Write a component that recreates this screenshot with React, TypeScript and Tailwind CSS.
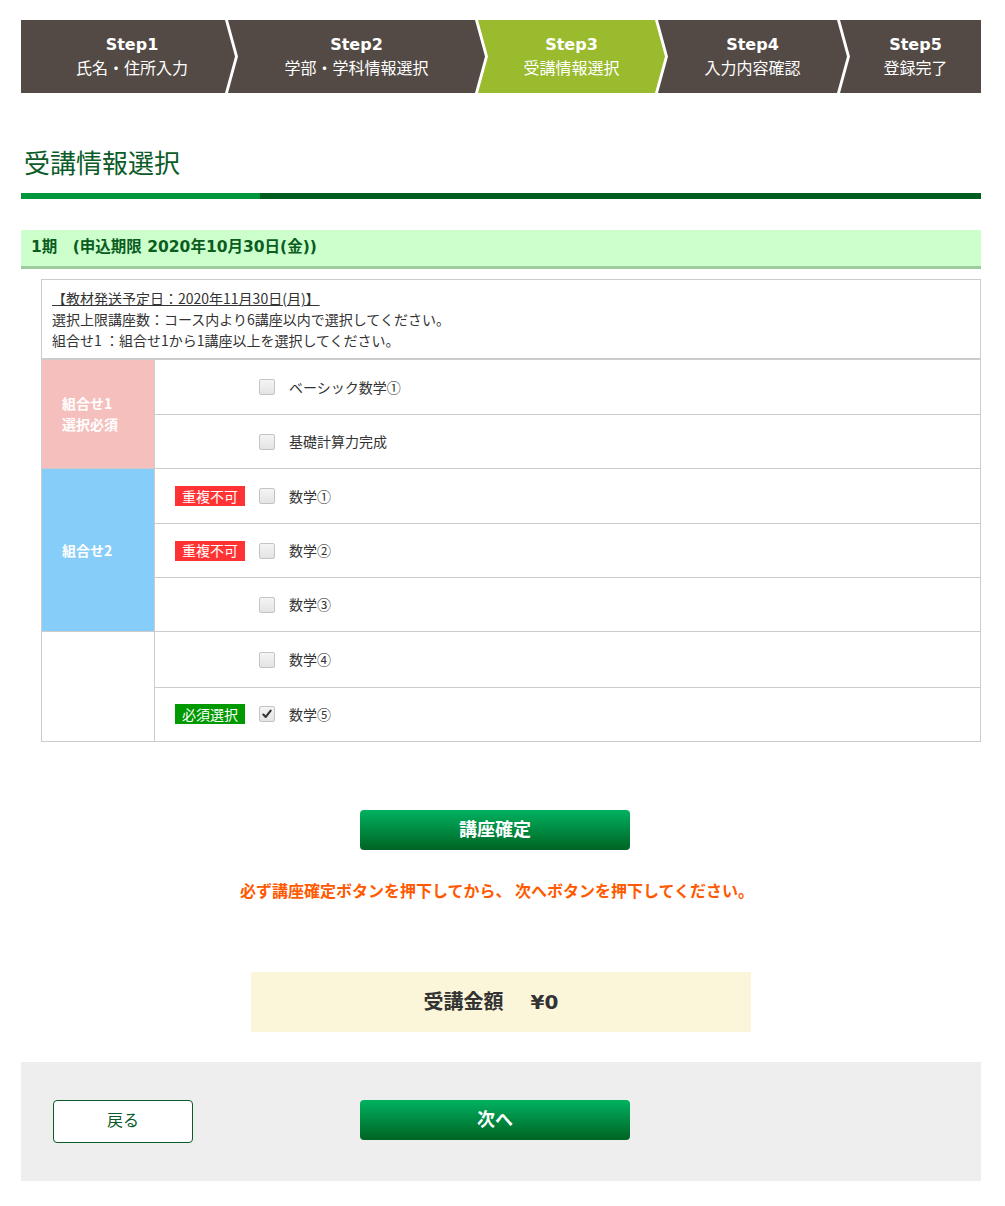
import React from 'react';

const steps = [
  { no: 'Step1', label: '氏名・住所入力', box: 'w-[214px] pl-[18px] pr-[10px] [clip-path:polygon(0_0,calc(100%_-_10px)_0,100%_50%,calc(100%_-_10px)_100%,0_100%)]' },
  { no: 'Step2', label: '学部・学科情報選択', box: 'w-[257px] ml-[-7px] px-[10px] [clip-path:polygon(0_0,calc(100%_-_10px)_0,100%_50%,calc(100%_-_10px)_100%,0_100%,10px_50%)]' },
  { no: 'Step3', label: '受講情報選択', box: 'w-[187px] ml-[-7px] px-[10px] [clip-path:polygon(0_0,calc(100%_-_10px)_0,100%_50%,calc(100%_-_10px)_100%,0_100%,10px_50%)]', active: true },
  { no: 'Step4', label: '入力内容確認', box: 'w-[189px] ml-[-7px] px-[10px] [clip-path:polygon(0_0,calc(100%_-_10px)_0,100%_50%,calc(100%_-_10px)_100%,0_100%,10px_50%)]' },
  { no: 'Step5', label: '登録完了', box: 'flex-1 ml-[-7px] pl-[10px] [clip-path:polygon(0_0,100%_0,100%_100%,0_100%,10px_50%)]' },
];

type Course = { name: string; badge?: 'dup' | 'must'; checked?: boolean };

const groups: { label?: string[]; bg: string; courses: Course[] }[] = [
  {
    label: ['組合せ1', '選択必須'],
    bg: 'bg-[#f5bfbd]',
    courses: [{ name: 'ベーシック数学①' }, { name: '基礎計算力完成' }],
  },
  {
    label: ['組合せ2'],
    bg: 'bg-[#87cdf9]',
    courses: [
      { name: '数学①', badge: 'dup' },
      { name: '数学②', badge: 'dup' },
      { name: '数学③' },
    ],
  },
  {
    bg: 'bg-white',
    courses: [{ name: '数学④' }, { name: '数学⑤', badge: 'must', checked: true }],
  },
];

const Checkbox = ({ checked }: { checked?: boolean }) => (
  <span className="flex h-4 w-4 items-center justify-center rounded-[2px] border border-[#c4c4c4] bg-gradient-to-b from-[#f4f4f4] to-[#e4e4e4]">
    {checked && (
      <svg viewBox="0 0 16 16" className="h-4 w-4">
        <path d="M3.8 8.6 L6.6 11.4 L12.2 4.2" fill="none" stroke="#333" strokeWidth="2.4" strokeLinecap="round" strokeLinejoin="round" />
      </svg>
    )}
  </span>
);

const GreenButton = ({ children }: { children: React.ReactNode }) => (
  <button className="flex h-[40px] w-[270px] items-center justify-center rounded-[4px] bg-gradient-to-b from-[#00b260] to-[#006424] text-[18px] font-bold text-white">
    {children}
  </button>
);

export default function App() {
  return (
    <div className="min-h-[1206px] bg-white pl-[21px] pr-[24px] pt-[20px] pb-[25px] text-[#333] [font-family:'DejaVu_Sans','Noto_Sans_CJK_JP',sans-serif]">
      {/* Steps */}
      <div className="flex h-[73px]">
        {steps.map((s) => (
          <div
            key={s.no}
            className={`flex flex-col items-center justify-center text-white ${s.box} ${s.active ? 'bg-[#9bbb2f]' : 'bg-[#534a45]'}`}
          >
            <span className="text-[16px] font-bold leading-[24px]">{s.no}</span>
            <span className="text-[16px] leading-[24px]">{s.label}</span>
          </div>
        ))}
      </div>

      {/* Title */}
      <h1 className="mt-[53px] pl-[3px] text-[26px] leading-[36px] text-[#0b5c28]">受講情報選択</h1>
      <div className="mt-[11px] flex h-[6px]">
        <div className="w-[239px] bg-[#00963c]" />
        <div className="flex-1 bg-[#005c1f]" />
      </div>

      {/* Period header */}
      <div className="mt-[31px] flex h-[39px] items-center border-b-[3px] border-[#9dcd9d] bg-[#ccffcc] pl-[10px] text-[15.5px] font-bold text-[#0b5c1f]">
        1期　(申込期限 2020年10月30日(金))
      </div>

      {/* Course table */}
      <div className="ml-[20px] mt-[10px] border border-[#cccccc] [font-family:'Noto_Sans_CJK_JP',sans-serif]">
        <div className="border-b-2 border-[#cccccc] pl-[10px] pt-[8px] pb-[7px] text-[14px] leading-[21px]">
          <p className="underline">【教材発送予定日：2020年11月30日(月)】</p>
          <p>選択上限講座数：コース内より6講座以内で選択してください。</p>
          <p>組合せ1 ：組合せ1から1講座以上を選択してください。</p>
        </div>
        {groups.map((g, gi) => (
          <div key={gi} className={`flex ${gi > 0 ? 'border-t border-[#cccccc]' : ''}`}>
            <div className={`flex w-[113px] flex-col justify-center border-r border-[#cccccc] pl-[20px] text-[14px] font-bold leading-[21px] text-white ${g.bg}`}>
              {g.label?.map((l) => <span key={l}>{l}</span>)}
            </div>
            <div className="flex-1">
              {g.courses.map((c, ci) => (
                <div
                  key={c.name}
                  className={`flex h-[54.1px] items-center pl-[20px] text-[14px] ${ci > 0 ? 'border-t border-[#cccccc]' : ''}`}
                >
                  <span className="w-[70px]">
                    {c.badge === 'dup' && (
                      <span className="flex h-[20px] w-[70px] items-center justify-center bg-[#ff3333] text-white">重複不可</span>
                    )}
                    {c.badge === 'must' && (
                      <span className="flex h-[20px] w-[70px] items-center justify-center bg-[#009900] text-white">必須選択</span>
                    )}
                  </span>
                  <span className="ml-[14px]">
                    <Checkbox checked={c.checked} />
                  </span>
                  <span className="ml-[14px]">{c.name}</span>
                </div>
              ))}
            </div>
          </div>
        ))}
      </div>

      {/* Confirm */}
      <div className="mt-[68px] flex justify-center pr-[12px]">
        <GreenButton>講座確定</GreenButton>
      </div>
      <p className="mt-[30px] pr-[8px] text-center text-[16px] font-bold leading-[20px] text-[#ff5a00] [font-family:'Noto_Sans_CJK_JP',sans-serif]">
        必ず講座確定ボタンを押下してから、 次へボタンを押下してください。
      </p>

      {/* Price */}
      <div className="mx-auto mt-[72px] flex h-[60px] w-[500px] items-center justify-center bg-[#fbf6da] pr-[20px] text-[20px] font-bold text-[#333]">
        受講金額　 ¥0
      </div>

      {/* Footer */}
      <div className="mt-[30px] flex items-start bg-[#eeeeee] pl-[32px] pt-[38px] pb-[38px]">
        <button className="flex h-[43px] w-[140px] items-center justify-center rounded-[4px] border border-[#0b5c28] bg-white text-[16px] text-[#0b5c28]">
          戻る
        </button>
        <div className="ml-[167px]">
          <GreenButton>次へ</GreenButton>
        </div>
      </div>
    </div>
  );
}
